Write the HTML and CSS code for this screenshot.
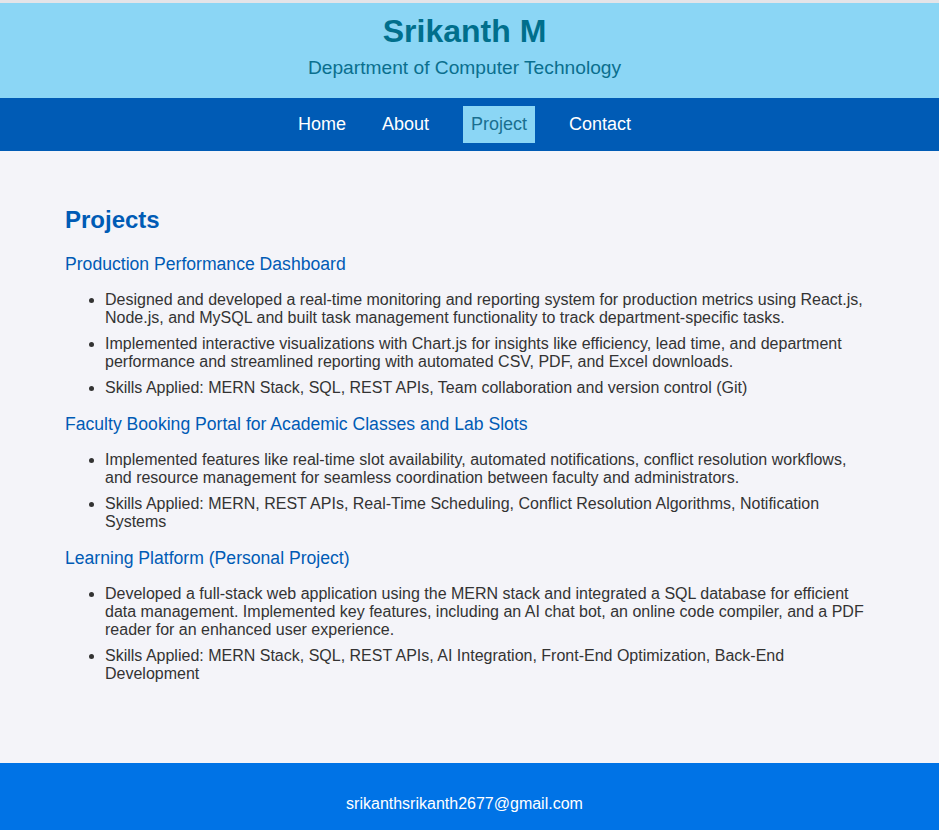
FILE: index.html
```html
<!DOCTYPE html>
<html lang="en">
<head>
<meta charset="utf-8">
<title>Srikanth M - Projects</title>
<link rel="stylesheet" href="styles.css">
</head>
<body>
<header class="site-header">
  <h1 class="name">Srikanth M</h1>
  <p class="dept">Department of Computer Technology</p>
</header>
<nav class="site-nav">
  <a class="nav-link" href="#">Home</a>
  <a class="nav-link" href="#">About</a>
  <a class="nav-link active" href="#">Project</a>
  <a class="nav-link" href="#">Contact</a>
</nav>
<main class="content">
  <section class="projects">
    <h2 class="section-title">Projects</h2>

    <h3 class="project-title">Production Performance Dashboard</h3>
    <ul class="project-list">
      <li>Designed and developed a real-time monitoring and reporting system for production metrics using React.js, Node.js, and MySQL and built task management functionality to track department-specific tasks.</li>
      <li>Implemented interactive visualizations with Chart.js for insights like efficiency, lead time, and department performance and streamlined reporting with automated CSV, PDF, and Excel downloads.</li>
      <li>Skills Applied: MERN Stack, SQL, REST APIs, Team collaboration and version control (Git)</li>
    </ul>

    <h3 class="project-title">Faculty Booking Portal for Academic Classes and Lab Slots</h3>
    <ul class="project-list">
      <li>Implemented features like real-time slot availability, automated notifications, conflict resolution workflows, and resource management for seamless coordination between faculty and administrators.</li>
      <li>Skills Applied: MERN, REST APIs, Real-Time Scheduling, Conflict Resolution Algorithms, Notification Systems</li>
    </ul>

    <h3 class="project-title">Learning Platform (Personal Project)</h3>
    <ul class="project-list">
      <li>Developed a full-stack web application using the MERN stack and integrated a SQL database for efficient data management. Implemented key features, including an AI chat bot, an online code compiler, and a PDF reader for an enhanced user experience.</li>
      <li>Skills Applied: MERN Stack, SQL, REST APIs, AI Integration, Front-End Optimization, Back-End Development</li>
    </ul>
  </section>
</main>
<footer class="site-footer">
  <p class="email">srikanthsrikanth2677@gmail.com</p>
</footer>
</body>
</html>
```
FILE: styles.css
```css
html, body {
  margin: 0;
  padding: 0;
}
body {
  font-family: "Liberation Sans", Arial, sans-serif;
  background: #f4f4f9;
  color: #333;
  border-top: 3px solid #e4e4e8;
}
.site-header {
  background: #8bd6f5;
  text-align: center;
  padding: 10px 10px 19px 0;
}
.name {
  margin: 0;
  font-size: 32px;
  font-weight: bold;
  color: #006f8c;
}
.dept {
  margin: 7px 0 0;
  font-size: 19.2px;
  color: #0a6f8e;
}
.site-nav {
  background: #005bb5;
  display: flex;
  justify-content: center;
  gap: 20px;
  padding: 8px 10px 8px 0;
}
.nav-link {
  color: #fff;
  text-decoration: none;
  font-size: 18px;
  padding: 8px 8px;
}
.nav-link.active {
  background: #8bd6f5;
  color: #1a6f90;
  margin: 0 6px;
}
.content {
  padding: 35px 65px 64px;
}
.section-title {
  margin: 20px 0 19.92px;
  font-size: 24px;
  color: #005bb5;
}
.project-title {
  margin: 17px 0 10px;
  font-size: 17.6px;
  font-weight: normal;
  color: #005bb5;
}
.project-list {
  margin: 16px 0;
  padding-left: 40px;
  font-size: 16px;
}
.project-list li {
  margin-bottom: 8px;
}
.site-footer {
  background: #0073e6;
  color: #fff;
  text-align: center;
  padding: 32px 10px 30px 0;
}
.email {
  margin: 0;
  font-size: 16px;
}
```
